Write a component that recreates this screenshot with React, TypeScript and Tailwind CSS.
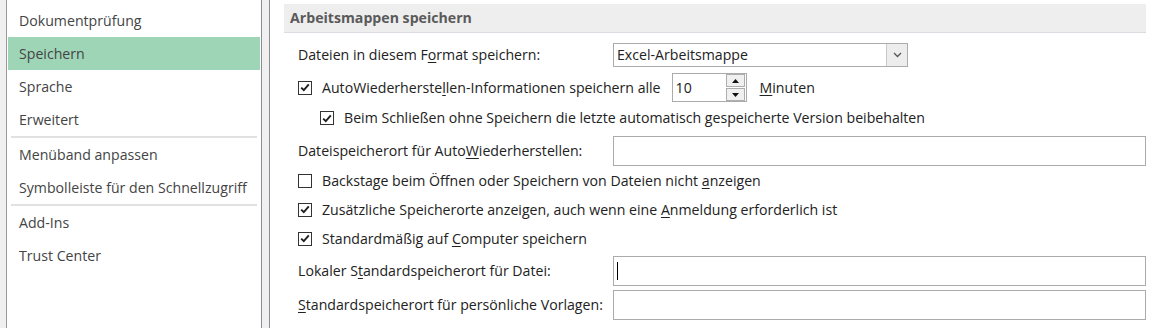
import React from 'react';

const font = { fontFamily: '"Open Sans", "Noto Sans", sans-serif' };

function Check({ checked }: { checked?: boolean }) {
  return (
    <span className="w-[14px] h-[14px] border border-[#333] bg-white flex items-center justify-center shrink-0">
      {checked && (
        <svg width="10" height="9" viewBox="0 0 10 9">
          <path d="M1.2 4.6 L3.8 7.2 L8.8 1.4" stroke="#1f1f1f" strokeWidth="1.9" fill="none" />
        </svg>
      )}
    </span>
  );
}

function TextBox({ caret }: { caret?: boolean }) {
  return (
    <div className="w-[533px] h-[30px] border border-[#ababab] bg-white flex items-center pl-[3px]">
      {caret && <span className="w-[1px] h-[18px] bg-black" />}
    </div>
  );
}

const navGroups = [
  ['Dokumentprüfung', 'Speichern', 'Sprache', 'Erweitert'],
  ['Menüband anpassen', 'Symbolleiste für den Schnellzugriff'],
  ['Add-Ins', 'Trust Center'],
];

export default function App() {
  return (
    <div className="flex w-[1158px] h-[328px] bg-white overflow-hidden text-[14.15px] text-[#222]" style={font}>
      {/* left frame edge */}
      <div className="w-[7px] bg-[#f0f0f0] border-r border-[#9a9a9a] shrink-0" />

      {/* sidebar */}
      <div className="w-[254px] shrink-0 pt-[4px] pl-[1px] pr-[1px]">
        {navGroups.map((group, gi) => (
          <div key={gi}>
            {gi > 0 && <div className="h-[2px] bg-[#e1e1e1] ml-[3px] mr-[3px]" />}
            {group.map(item => (
              <div
                key={item}
                className={`h-[33px] flex items-center pl-[11px] text-[#444] ${item === 'Speichern' ? 'bg-[#9fd5b7]' : ''}`}
              >
                {item}
              </div>
            ))}
          </div>
        ))}
      </div>

      {/* splitter */}
      <div className="w-[9px] shrink-0 bg-[#f0f0f0] border-x border-[#8c8c94]" />

      {/* content */}
      <div className="flex-1 pl-[14px] pr-[12px]">
        <div className="mt-[4px] h-[29px] bg-[#eeeeee] border-b border-[#dcdce2] flex items-center pl-[6px] font-bold text-[#5a5a5a]">
          Arbeitsmappen speichern
        </div>

        <div className="pl-[14px]">
          {/* format */}
          <div className="mt-[10px] h-[24px] flex items-center">
            <span className="w-[315px]">
              Dateien in diesem F<u className="underline-offset-2">o</u>rmat speichern:
            </span>
            <div className="w-[295px] h-[24px] border border-[#ababab] flex items-stretch">
              <span className="flex-1 flex items-center pl-[3px]">Excel-Arbeitsmappe</span>
              <span className="w-[21px] border-l border-[#c9c9c9] bg-[#ededed] flex items-center justify-center">
                <svg width="9" height="6" viewBox="0 0 9 6">
                  <path d="M1 1 L4.5 4.5 L8 1" stroke="#555" strokeWidth="1.3" fill="none" />
                </svg>
              </span>
            </div>
          </div>

          {/* autorecover interval */}
          <div className="mt-[6px] h-[29px] flex items-center">
            <Check checked />
            <span className="ml-[10px]">
              AutoWiederherste<u className="underline-offset-2">l</u>len-Informationen speichern alle
            </span>
            <div className="ml-[11px] w-[75px] h-[29px] border border-[#ababab] flex items-stretch">
              <span className="flex-1 flex items-center pl-[3px]">10</span>
              <div className="w-[20px] flex flex-col justify-center gap-[1px] pr-[1px]">
                <span className="h-[13px] border border-[#adadad] bg-[#f0f0f0] flex items-center justify-center">
                  <svg width="7" height="4" viewBox="0 0 7 4"><path d="M0 4 L3.5 0 L7 4Z" fill="#111" /></svg>
                </span>
                <span className="h-[13px] border border-[#adadad] bg-[#f0f0f0] flex items-center justify-center">
                  <svg width="7" height="4" viewBox="0 0 7 4"><path d="M0 0 L3.5 4 L7 0Z" fill="#111" /></svg>
                </span>
              </div>
            </div>
            <span className="ml-[13px]">
              <u className="underline-offset-2">M</u>inuten
            </span>
          </div>

          {/* keep last version */}
          <div className="h-[32px] flex items-center pl-[22px]">
            <Check checked />
            <span className="ml-[10px]">Beim Schließen ohne Speichern die letzte automatisch gespeicherte Version beibehalten</span>
          </div>

          {/* autorecover location */}
          <div className="mt-[2px] h-[30px] flex items-center">
            <span className="w-[315px]">
              Dateispeicherort für Auto<u className="underline-offset-2">W</u>iederherstellen:
            </span>
            <TextBox />
          </div>

          <div className="mt-[1px] h-[28px] flex items-center">
            <Check />
            <span className="ml-[10px]">
              Backstage beim Öffnen oder Speichern von Dateien nicht <u className="underline-offset-2">a</u>nzeigen
            </span>
          </div>

          <div className="h-[29px] flex items-center">
            <Check checked />
            <span className="ml-[10px]">
              Zusätzliche Speicherorte anzeigen, auch wenn eine <u className="underline-offset-2">A</u>nmeldung erforderlich ist
            </span>
          </div>

          <div className="h-[29px] flex items-center">
            <Check checked />
            <span className="ml-[10px]">
              Standardmäßig auf <u className="underline-offset-2">C</u>omputer speichern
            </span>
          </div>

          <div className="mt-[3px] h-[30px] flex items-center">
            <span className="w-[315px]">
              Lokaler S<u className="underline-offset-2">t</u>andardspeicherort für Datei:
            </span>
            <TextBox caret />
          </div>

          <div className="mt-[4px] h-[30px] flex items-center">
            <span className="w-[315px]">
              <u className="underline-offset-2">S</u>tandardspeicherort für persönliche Vorlagen:
            </span>
            <TextBox />
          </div>
        </div>
      </div>
    </div>
  );
}
